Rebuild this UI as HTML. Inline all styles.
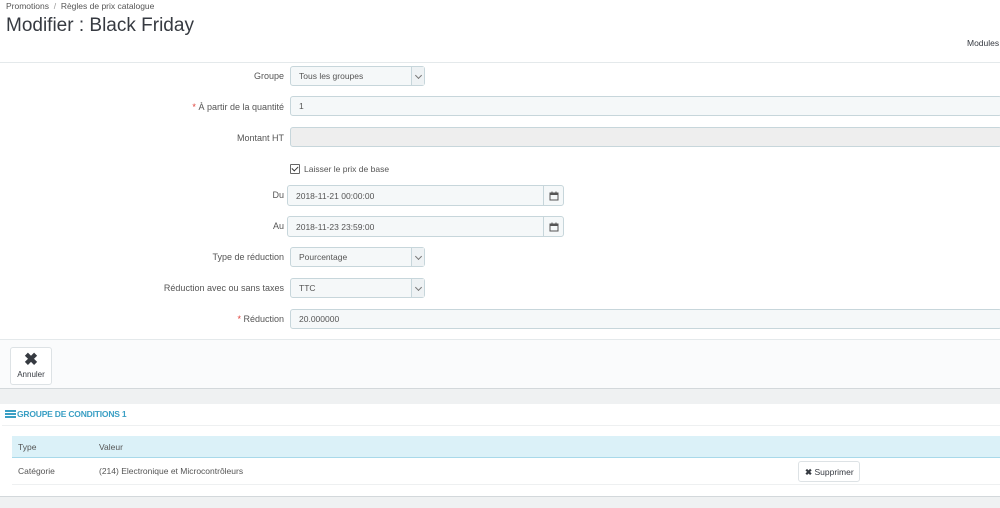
<!DOCTYPE html>
<html><head><meta charset="utf-8"><style>
*{box-sizing:border-box;margin:0;padding:0}
body{width:1000px;height:508px;overflow:hidden;background:#eff1f2;font-family:"Liberation Sans",sans-serif;font-size:9px;color:#555;position:relative}
.a{position:absolute}
.lbl{position:absolute;right:716px;text-align:right;color:#555;font-size:9px}
.inp{position:absolute;background:#f5f8f9;border:1px solid #c7d6db;border-radius:3px;font-size:8.5px;color:#555;padding:0 0 0 8px;display:flex;align-items:center}
.sel{width:135px}
.sel:after{content:"";position:absolute;right:0;top:0;width:12px;height:100%;border-left:1px solid #c7d6db;background:#eef2f4}
.arr{position:absolute;right:3px;top:6px;width:5px;height:5px;border-right:1px solid #777;border-bottom:1px solid #777;transform:rotate(45deg);z-index:2}
.cal{position:absolute;right:0;top:0;width:20px;height:100%;border-left:1px solid #c7d6db;display:flex;align-items:center;justify-content:center}
.req{color:#e0403a}
</style></head><body>
<div class="a" style="left:0;top:0;width:1000px;height:340px;background:#fff;border-bottom:1px solid #e4e9eb"></div>
<div class="a" style="left:6px;top:1px;font-size:8.5px;color:#555">Promotions &nbsp;<span style="color:#999">/</span>&nbsp; Règles de prix catalogue</div>
<div class="a" style="left:6px;top:15px;font-size:19px;color:#363a41">Modifier : Black Friday</div>
<div class="a" style="left:967px;top:38px;font-size:8.5px;color:#363a41">Modules</div>
<div class="a" style="left:0;top:62px;width:1000px;height:1px;background:#e4e9eb"></div>

<div class="lbl" style="top:71px">Groupe</div>
<div class="inp sel" style="left:290px;top:66px;height:20px">Tous les groupes<span class="arr"></span></div>
<div class="lbl" style="top:102px"><span class="req">*</span> À partir de la quantité</div>
<div class="inp" style="left:290px;top:96px;width:712px;height:20px">1</div>
<div class="lbl" style="top:133px">Montant HT</div>
<div class="inp" style="left:290px;top:127px;width:712px;height:20px;background:#eee"></div>
<div class="a" style="left:290px;top:164px;width:10px;height:10px;border:1px solid #666;border-radius:1px"></div>
<div class="a" style="left:292px;top:164px;width:6px;height:4px;border-left:1px solid #333;border-bottom:1px solid #333;transform:translate(0,2px) rotate(-45deg)"></div>
<div class="a" style="left:304px;top:164px;font-size:8.5px">Laisser le prix de base</div>
<div class="lbl" style="top:190px">Du</div>
<div class="inp" style="left:287px;top:185px;width:277px;height:21px">2018-11-21 00:00:00<div class="cal"><svg width="10" height="10" viewBox="0 0 10 10"><rect x="1" y="2" width="8" height="7" fill="none" stroke="#555"/><rect x="1" y="2" width="8" height="2" fill="#555"/><rect x="2.5" y="0.5" width="1" height="2" fill="#555"/><rect x="6.5" y="0.5" width="1" height="2" fill="#555"/></svg></div></div>
<div class="lbl" style="top:221px">Au</div>
<div class="inp" style="left:287px;top:216px;width:277px;height:21px">2018-11-23 23:59:00<div class="cal"><svg width="10" height="10" viewBox="0 0 10 10"><rect x="1" y="2" width="8" height="7" fill="none" stroke="#555"/><rect x="1" y="2" width="8" height="2" fill="#555"/><rect x="2.5" y="0.5" width="1" height="2" fill="#555"/><rect x="6.5" y="0.5" width="1" height="2" fill="#555"/></svg></div></div>
<div class="lbl" style="top:252px">Type de réduction</div>
<div class="inp sel" style="left:290px;top:247px;height:20px">Pourcentage<span class="arr"></span></div>
<div class="lbl" style="top:283px">Réduction avec ou sans taxes</div>
<div class="inp sel" style="left:290px;top:278px;height:20px">TTC<span class="arr"></span></div>
<div class="lbl" style="top:314px"><span class="req">*</span> Réduction</div>
<div class="inp" style="left:290px;top:309px;width:712px;height:20px">20.000000</div>

<div class="a" style="left:0;top:340px;width:1000px;height:49px;background:#fafbfc;border-bottom:1px solid #d3d8db"></div>
<div class="a" style="left:10px;top:347px;width:42px;height:38px;background:#fff;border:1px solid #dde2e5;border-radius:3px;text-align:center">
<div style="font-size:17px;font-weight:bold;color:#363a41;line-height:20px;margin-top:2px">✖</div>
<div style="font-size:8px;color:#363a41">Annuler</div></div>

<div class="a" style="left:0;top:404px;width:1000px;height:93px;background:#fff;border-bottom:1px solid #d3d8db"></div>
<div class="a" style="left:2px;top:425px;width:998px;height:1px;background:#eef0f1"></div>
<svg class="a" style="left:5px;top:410px" width="11" height="8" viewBox="0 0 11 8"><rect x="0" y="0" width="11" height="2" fill="#3a9fc4"/><rect x="0" y="3" width="11" height="2" fill="#3a9fc4"/><rect x="0" y="6" width="11" height="2" fill="#3a9fc4"/></svg>
<div class="a" style="left:17px;top:409px;font-size:8.5px;color:#3a9fc4;font-weight:bold;letter-spacing:-0.2px">GROUPE DE CONDITIONS 1</div>
<div class="a" style="left:12px;top:436px;width:988px;height:22px;background:#dbf1f8;border-bottom:1px solid #a8d9ea"></div>
<div class="a" style="left:18px;top:442px;font-size:8.5px">Type</div>
<div class="a" style="left:99px;top:442px;font-size:8.5px">Valeur</div>
<div class="a" style="left:12px;top:484px;width:988px;height:1px;background:#eef0f1"></div>
<div class="a" style="left:18px;top:466px;font-size:8.5px">Catégorie</div>
<div class="a" style="left:99px;top:466px;font-size:8.5px">(214) Electronique et Microcontrôleurs</div>
<div class="a" style="left:798px;top:461px;width:62px;height:21px;border:1px solid #dde2e5;border-radius:3px;background:#fff;font-size:8.5px;color:#363a41;padding:5px 0 0 6px"><b>✖</b> Supprimer</div>
</body></html>
